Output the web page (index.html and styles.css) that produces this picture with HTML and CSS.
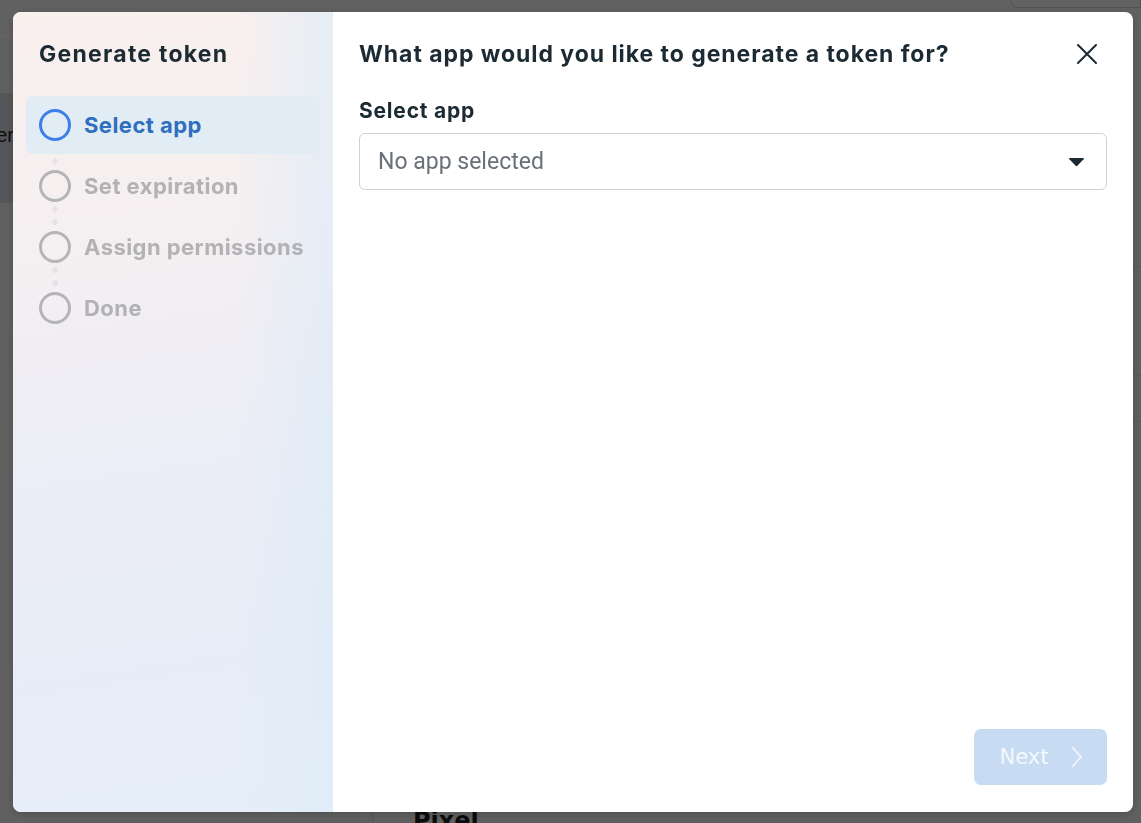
FILE: index.html
```html
<!DOCTYPE html>
<html lang="en">
<head>
<meta charset="utf-8">
<title>Generate token</title>
<link rel="stylesheet" href="styles.css">
</head>
<body>
  <div class="page">
    <header class="page-top">
      <div class="top-action"></div>
    </header>
    <div class="page-body">
      <aside class="page-nav">
        <div class="nav-item">User</div>
      </aside>
      <main class="page-main">
        <div class="rows">
          <div class="row r1"></div>
          <div class="row r2"></div>
          <div class="row r3"></div>
        </div>
        <h2 class="section-title">Pixel</h2>
      </main>
    </div>
  </div>

  <div class="overlay">
    <div class="dialog" role="dialog" aria-labelledby="dlg-title">
      <nav class="steps-panel">
        <h1 class="steps-title">Generate token</h1>
        <ol class="steps">
          <li class="step active"><span class="ring"></span><span class="step-label">Select app</span></li>
          <li class="step"><span class="ring"></span><span class="step-label">Set expiration</span></li>
          <li class="step"><span class="ring"></span><span class="step-label">Assign permissions</span></li>
          <li class="step"><span class="ring"></span><span class="step-label">Done</span></li>
        </ol>
      </nav>
      <section class="content">
        <div class="content-head">
          <h2 id="dlg-title" class="question">What app would you like to generate a token for?</h2>
          <button class="close" aria-label="Close">
            <svg width="20" height="20" viewBox="0 0 20 20"><path d="M1 1 L19 19 M19 1 L1 19" stroke="#1c2b33" stroke-width="2" stroke-linecap="round" fill="none"/></svg>
          </button>
        </div>
        <label class="field-label" for="app">Select app</label>
        <div class="select" id="app">
          <span class="placeholder">No app selected</span>
          <svg class="caret" width="17" height="10" viewBox="0 0 17 10"><path d="M2 1 H15 Q16.6 1 15.6 2.3 L9.6 8.6 Q8.5 9.7 7.4 8.6 L1.4 2.3 Q0.4 1 2 1 Z" fill="#1c2b33"/></svg>
        </div>
        <div class="spacer"></div>
        <div class="actions">
          <button class="next" disabled>
            <span>Next</span>
            <svg width="12" height="22" viewBox="0 0 12 22"><path d="M1.5 1.5 L10 11 L1.5 20.5" stroke="#f4f8fd" stroke-width="1.6" fill="none" stroke-linecap="round" stroke-linejoin="round"/></svg>
          </button>
        </div>
      </section>
    </div>
  </div>
</body>
</html>
```

FILE: styles.css
```css
* { box-sizing: border-box; }

html, body {
  margin: 0;
  height: 100%;
}

body {
  font-family: "Liberation Sans", Arial, sans-serif;
  background: #f0f0f0;
  overflow: hidden;
}

/* ---------- page behind the dialog ---------- */
.page {
  height: 100vh;
  display: flex;
  flex-direction: column;
}

.page-top {
  height: 37px;
  border-bottom: 1px solid #ffffff;
  background: #f2f2f2;
  display: flex;
  justify-content: flex-end;
}

.top-action {
  width: 131px;
  height: 8px;
  border: 1px solid #d0d0d0;
  border-top: none;
  border-radius: 0 0 0 8px;
  background: #f4f4f4;
}

.page-body {
  flex: 1;
  display: flex;
}

.page-nav {
  width: 373px;
  border-right: 1px solid #d6d6d6;
  padding-top: 56px;
}

.nav-item {
  height: 110px;
  background: #d4d8de;
  font-size: 20px;
  line-height: 24px;
  color: #222;
  display: flex;
  align-items: flex-start;
  justify-content: flex-end;
  padding: 30px 358px 0 0;
  overflow: hidden;
  white-space: nowrap;
}

.page-main {
  flex: 1;
  display: flex;
  flex-direction: column;
}

.rows {
  padding-top: 229px;
  flex: 1;
}

.row {
  border-bottom: 1px solid #dddddd;
}
.r1 { height: 0; }
.r2 { height: 109px; }
.r3 { height: 46px; }

.section-title {
  margin: 0 0 -10px 40px;
  font-family: "DejaVu Sans", sans-serif;
  font-size: 24px;
  font-weight: 700;
  color: #1c1e21;
  line-height: 24px;
}

/* ---------- dim layer and dialog ---------- */
.overlay {
  position: fixed;
  inset: 0;
  background: rgba(0, 0, 0, 0.6);
  padding: 12px 8px 11px 13px;
  display: flex;
}

.dialog {
  flex: 1;
  display: flex;
  border-radius: 8px;
  overflow: hidden;
  background: #fff;
  box-shadow: 0 2px 8px rgba(0, 0, 0, 0.2);
}

/* ---------- left step list ---------- */
.steps-panel {
  width: 320px;
  flex: none;
  padding: 28px 13px 0 13px;
  background:
    linear-gradient(90deg, rgba(230, 240, 248, 0) 70%, rgba(222, 236, 248, 0.7) 100%),
    linear-gradient(172deg, #f9f0ee 0%, #f4eff1 30%, #ecedf6 55%, #e7edf8 80%, #e6eef8 100%);
}

.steps-title {
  margin: 0 0 28px 13px;
  font-family: Inter, "Liberation Sans", sans-serif;
  font-size: 23px;
  line-height: 28px;
  font-weight: 700;
  color: #1c2b33;
  letter-spacing: 1.25px;
}

.steps {
  list-style: none;
  margin: 0;
  padding: 0;
  display: flex;
  flex-direction: column;
  gap: 3px;
}

.step {
  position: relative;
  height: 58px;
  display: flex;
  align-items: center;
  gap: 13px;
  padding-left: 13px;
  border-radius: 7px;
  color: #b2b2b5;
}

/* dotted connector between rings */
.step + .step::before {
  content: "";
  position: absolute;
  left: 26px;
  top: -12px;
  width: 6px;
  height: 19px;
  background:
    radial-gradient(circle, #e6e1e4 2.6px, transparent 3px) 0 0 / 6px 6px no-repeat,
    radial-gradient(circle, #e6e1e4 2.6px, transparent 3px) 0 13px / 6px 6px no-repeat;
}

.step.active {
  z-index: 1;
  background: #e1ecf5;
  color: #2f6fbd;
}

.ring {
  width: 32px;
  height: 32px;
  border-radius: 50%;
  border: 3px solid #b4b4b7;
  flex: none;
}

.step.active .ring {
  border-color: #3d7fe6;
}

.step-label {
  font-family: Inter, "Liberation Sans", sans-serif;
  font-size: 22px;
  font-weight: 700;
  letter-spacing: 0.45px;
}

/* ---------- right content ---------- */
.content {
  flex: 1;
  display: flex;
  flex-direction: column;
  padding: 28px 26px 27px 26px;
}

.content-head {
  display: flex;
  align-items: center;
  justify-content: space-between;
}

.question {
  margin: 0;
  font-family: Inter, "Liberation Sans", sans-serif;
  font-size: 23px;
  line-height: 28px;
  font-weight: 700;
  color: #1c2b33;
  letter-spacing: 0.95px;
}

.close {
  border: none;
  background: none;
  padding: 0;
  margin-right: 10px;
  width: 20px;
  height: 20px;
  display: flex;
}

.field-label {
  margin-top: 30px;
  font-family: Inter, "Liberation Sans", sans-serif;
  font-size: 21px;
  line-height: 25px;
  font-weight: 700;
  color: #1c2b33;
  letter-spacing: 0.8px;
}

.select {
  margin-top: 10px;
  height: 57px;
  border: 1px solid #ced0d4;
  border-radius: 6px;
  display: flex;
  align-items: center;
  justify-content: space-between;
  padding: 0 21px 0 18px;
}

.placeholder {
  font-family: Roboto, "Liberation Sans", sans-serif;
  font-size: 23px;
  color: #6a7077;
}

.spacer {
  flex: 1;
}

.actions {
  display: flex;
  justify-content: flex-end;
}

.next {
  width: 133px;
  height: 56px;
  border: none;
  border-radius: 7px;
  background: #c7dcf2;
  display: flex;
  align-items: center;
  justify-content: center;
  gap: 23px;
  padding: 0 0 0 2px;
  font-family: "DejaVu Sans", sans-serif;
  font-size: 21px;
  color: #f4f8fd;
}
```
